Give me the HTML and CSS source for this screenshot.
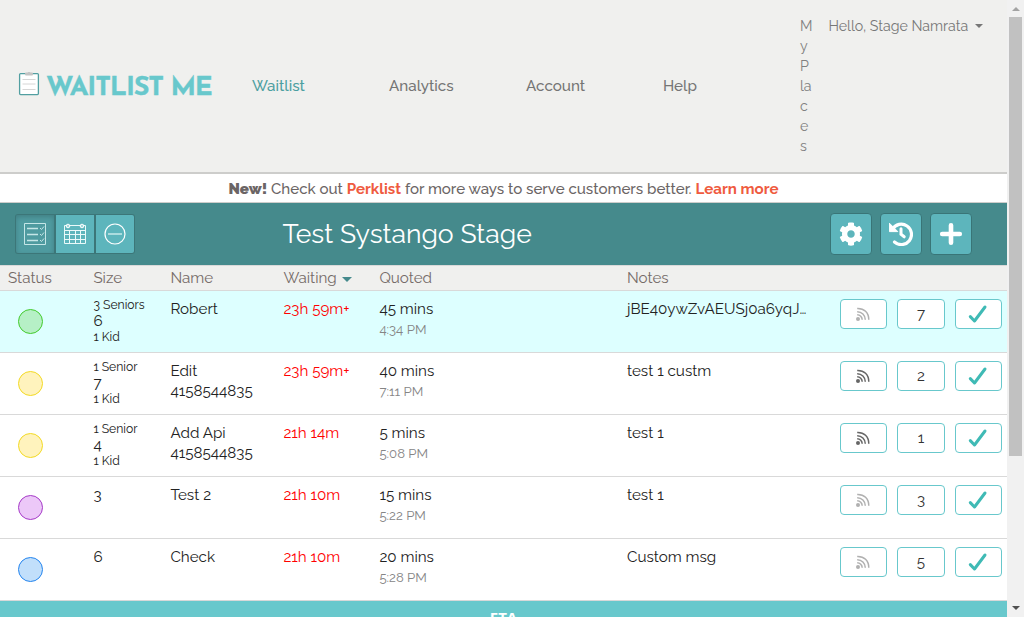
FILE: index.html
```
<!DOCTYPE html>
<html lang="en">
<head>
<meta charset="utf-8">
<title>Waitlist Me</title>
<link rel="stylesheet" href="styles.css">
</head>
<body>
<svg class="defs" width="0" height="0">
  <symbol id="signal" viewBox="0 0 16 16"><circle cx="3" cy="13" r="2"/><g fill="none" stroke="currentColor" stroke-width="1.5"><path d="M2.2 8.7A5 5 0 0 1 7.2 13.7M2.2 5.7A8 8 0 0 1 10.3 13.7M2.2 2.5C9 2.2 13.8 6.5 13.8 13.7"/></g></symbol>
  <symbol id="check" viewBox="0 0 20 20"><path d="M2.300 12.600l4.200 4.400L17 3" fill="none" stroke="#3fbab5" stroke-width="3" stroke-linecap="round" stroke-linejoin="round"/></symbol>
</svg>
<div class="window">
<div class="page">
  <header class="top">
    <div class="logo">
      <svg width="22" height="25" viewBox="0 0 22 25"><rect x="1.6" y="1.6" width="18.8" height="21" rx="1" fill="#fff" stroke="#529fa1" stroke-width="1.3"/><rect x="7" y=".5" width="8" height="3" rx="1" fill="#c4c4c4"/><circle cx="11" cy="1.4" r="1.400" fill="#c4c4c4"/><path d="M4.500 7.500h13M4.500 12h13M4.500 17.500h13" stroke="#d6d6d6"/></svg>
      <span class="brand">WAITLIST ME</span>
    </div>
    <nav class="nav"><a class="active">Waitlist</a><a class="analytics">Analytics</a><a class="account">Account</a><a class="help">Help</a></nav>
    <div class="places">M<br>y<br>P<br>la<br>c<br>e<br>s</div>
    <div class="user"><span>Hello, Stage Namrata</span><i class="caret"></i></div>
  </header>
  <div class="promo"><p><b>New!</b> Check out <a>Perklist</a> for more ways to serve customers better. <a>Learn more</a></p></div>
  <div class="bar">
    <div class="views">
      <button class="view on"><svg width="24" height="24" viewBox="0 0 24 24"><g fill="none" stroke="#c5e6e7"><path d="M1.500 1.500h21v21h-21z"/><path d="M4 6.500h11M4 12.500h11M4 18.500h11" stroke-width="1.4"/><path d="M17 6l1.500 1.500L21 4.500M17 12l1.500 1.500L21 10.500M17 18l1.500 1.500L21 16.500"/></g></svg></button>
      <button class="view"><svg width="24" height="24" viewBox="0 0 24 24"><g fill="none" stroke="#eafafa"><path d="M1.500 3.500h21v18h-21zM1.500 8.500h21M1.500 12.500h21M1.500 17.500h21M6.500 8.500v13M12.500 8.500v13M17.500 8.500v13" stroke-width="1"/></g><circle cx="5" cy="4" r="1.800" fill="#a3d9dc" stroke="#fff"/><circle cx="19" cy="4" r="1.800" fill="#a3d9dc" stroke="#fff"/></svg></button>
      <button class="view"><svg width="24" height="24" viewBox="0 0 24 24"><circle cx="12" cy="12" r="10" fill="none" stroke="#fff" stroke-width="1.2"/><path d="M5 12h14" stroke="#b5e0e2" stroke-width="1.8"/></svg></button>
    </div>
    <h1>Test Systango Stage</h1>
    <div class="tools">
      <button class="tool"><svg width="24" height="24" viewBox="0 0 512 512"><path fill="#fff" d="M487.400 315.700l-42.600-24.600c4.300-23.200 4.300-47 0-70.200l42.600-24.600c4.900-2.800 7.100-8.600 5.500-14-11.100-35.600-30-67.800-54.700-94.600-3.800-4.100-10-5.100-14.800-2.300L380.800 110c-17.900-15.400-38.500-27.300-60.800-35.100V25.800c0-5.600-3.900-10.500-9.400-11.700-36.700-8.200-74.300-7.800-109.200 0-5.500 1.200-9.400 6.100-9.400 11.700V75c-22.200 7.900-42.800 19.800-60.800 35.100L88.700 85.500c-4.900-2.800-11-1.900-14.800 2.300-24.700 26.700-43.600 58.900-54.700 94.600-1.700 5.400.6 11.200 5.500 14L67.300 221c-4.300 23.200-4.300 47 0 70.200l-42.600 24.600c-4.900 2.800-7.100 8.600-5.500 14 11.100 35.600 30 67.800 54.700 94.600 3.800 4.100 10 5.100 14.800 2.300l42.600-24.600c17.900 15.400 38.500 27.300 60.800 35.100v49.200c0 5.600 3.900 10.500 9.400 11.700 36.700 8.200 74.300 7.800 109.200 0 5.500-1.200 9.400-6.100 9.400-11.700v-49.200c22.200-7.900 42.800-19.800 60.800-35.100l42.600 24.600c4.900 2.800 11 1.900 14.800-2.300 24.700-26.700 43.600-58.900 54.700-94.600 1.500-5.500-.7-11.300-5.600-14.100zM256 336c-44.100 0-80-35.900-80-80s35.900-80 80-80 80 35.900 80 80-35.900 80-80 80z"/></svg></button>
      <button class="tool"><svg width="24" height="24" viewBox="0 0 24 24"><path d="M3.500 7.200A10.200 10.200 0 1 1 5.500 20" fill="none" stroke="#fff" stroke-width="3.200" stroke-linecap="round"/><path d="M.4 1.200v8.400h8.400z" fill="#fff" stroke="#fff" stroke-linejoin="round"/><path d="M12 6.800v5.500l3.200 2.500" fill="none" stroke="#fff" stroke-width="3" stroke-linecap="round"/></svg></button>
      <button class="tool"><svg width="24" height="24" viewBox="0 0 24 24"><path d="M3.200 12h17.600M12 3.200v17.600" stroke="#fff" stroke-width="4.600" stroke-linecap="round"/></svg></button>
    </div>
  </div>
  <div class="grid heads"><span>Status</span><span>Size</span><span>Name</span><span>Waiting <i class="caret sort"></i></span><span>Quoted</span><span>Notes</span></div>

  <div class="grid row fresh">
    <i class="dot green"></i>
    <div class="size"><small>3 Seniors</small><span>6</span><small>1 Kid</small></div>
    <div class="name">Robert</div><div class="wait">23h 59m+</div>
    <div>45 mins<small class="time">4:34 PM</small></div>
    <div class="note">jBE40ywZvAEUSj0a6yqJ…</div>
    <div class="acts"><button class="act dim"><svg width="16" height="16"><use href="#signal"/></svg></button><button class="act">7</button><button class="act"><svg width="20" height="20"><use href="#check"/></svg></button></div>
  </div>
  <div class="grid row">
    <i class="dot yellow"></i>
    <div class="size"><small>1 Senior</small><span>7</span><small>1 Kid</small></div>
    <div class="name">Edit<br>4158544835</div><div class="wait">23h 59m+</div>
    <div>40 mins<small class="time">7:11 PM</small></div>
    <div>test 1 custm</div>
    <div class="acts"><button class="act"><svg width="16" height="16"><use href="#signal"/></svg></button><button class="act">2</button><button class="act"><svg width="20" height="20"><use href="#check"/></svg></button></div>
  </div>
  <div class="grid row">
    <i class="dot yellow"></i>
    <div class="size"><small>1 Senior</small><span>4</span><small>1 Kid</small></div>
    <div class="name">Add Api<br>4158544835</div><div class="wait">21h 14m</div>
    <div>5 mins<small class="time">5:08 PM</small></div>
    <div>test 1</div>
    <div class="acts"><button class="act"><svg width="16" height="16"><use href="#signal"/></svg></button><button class="act">1</button><button class="act"><svg width="20" height="20"><use href="#check"/></svg></button></div>
  </div>
  <div class="grid row">
    <i class="dot purple"></i>
    <div>3</div>
    <div class="name">Test 2</div><div class="wait">21h 10m</div>
    <div>15 mins<small class="time">5:22 PM</small></div>
    <div>test 1</div>
    <div class="acts"><button class="act dim"><svg width="16" height="16"><use href="#signal"/></svg></button><button class="act">3</button><button class="act"><svg width="20" height="20"><use href="#check"/></svg></button></div>
  </div>
  <div class="grid row">
    <i class="dot blue"></i>
    <div>6</div>
    <div class="name">Check</div><div class="wait">21h 10m</div>
    <div>20 mins<small class="time">5:28 PM</small></div>
    <div>Custom msg</div>
    <div class="acts"><button class="act dim"><svg width="16" height="16"><use href="#signal"/></svg></button><button class="act">5</button><button class="act"><svg width="20" height="20"><use href="#check"/></svg></button></div>
  </div>
  <footer class="eta">ETA</footer>
</div>
<div class="scroll"><i class="arrow up"></i><i class="thumb"></i><i class="arrow down"></i></div>
</div>
</body>
</html>
```
FILE: styles.css
```
* { box-sizing: border-box; }
html, body { margin: 0; height: 100%; overflow: hidden; }
body { font: 15.2px/21px Raleway, Lato, sans-serif; color: #222; background: #fff; }
.defs { position: absolute; }
button { font: inherit; color: inherit; padding: 0; margin: 0; display: flex; align-items: center; justify-content: center; }
.window { display: flex; width: 1024px; height: 617px; overflow: hidden; }
.page { width: 1007px; flex: none; display: flex; flex-direction: column; }
.page > * { flex: none; }

.top { height: 174px; background: #f0f0ee; border-bottom: 2px solid #cdcdcb; display: flex; color: #757575; }
.logo { width: 252px; padding: 72px 0 0 18px; display: flex; align-items: flex-start; gap: 6px; }
.brand { font: 700 27px/26px "Josefin Sans", Lato, sans-serif; color: #68c8cc; white-space: nowrap; letter-spacing: -1.2px; padding-top: 4px; -webkit-text-stroke: .3px #68c8cc; }
.nav { width: 548px; padding-top: 76px; display: grid; grid-template-columns: repeat(4, 137px); font-weight: 500; }
.nav .active { color: #4c9fa1; }
.places { width: 28.400px; padding-top: 16px; font-size: 14.2px; line-height: 20px; color: #808080; }
.user { padding-top: 16px; font-size: 14.2px; line-height: 20px; display: flex; color: #777; white-space: nowrap; }
.caret { display: inline-block; border: 4px solid transparent; border-top-color: currentColor; border-bottom: 0; margin: 8px 0 0 7px; }
.promo { height: 29px; border-bottom: 1px solid #cdcdcb; text-align: center; color: #6b6565; line-height: 30px; }
.promo p { margin: 0; font-size: 15.100px; font-weight: 500; white-space: nowrap; }
.promo b { font-weight: 900; }
.promo a { color: #ef5b40; font-weight: 700; }

.bar { height: 62px; background: #458a8c; display: flex; align-items: flex-start; padding: 11px 35px 0 15px; }
.views { width: 267.500px; display: flex; }
.view { width: 40px; height: 40px; background: #5db5bc; border: 1px solid #3c7678; border-left-width: 0; border-right-width: 2px; }
.view:first-child { width: 41px; border-left-width: 1px; border-radius: 3px 0 0 3px; }
.view:last-child { width: 39px; border-right-width: 1px; border-radius: 0 3px 3px 0; }
.view.on { background: #4f9ba0; box-shadow: inset 0 2px 5px rgba(0,0,0,.18); }
h1 { margin: 0; font-size: 26.600px; line-height: 40px; font-weight: 400; color: #fff; white-space: nowrap; }
.tools { margin-left: auto; display: flex; gap: 8px; }
.tool { width: 42px; height: 42px; background: #5db5bc; border: 1px solid #397577; border-radius: 4px; margin-top: -1px; }

.grid { display: grid; grid-template-columns: 85.400px 77px 113px 96px 247.600px 213px 162px; padding-left: 8px; white-space: nowrap; }
.heads { height: 26px; background: #f0f0ee; border: solid #d9d9d9; border-width: 1px 0; line-height: 24px; color: #756b68; }
.sort { color: #458a8c; border-width: 5px; border-bottom: 0; margin: 0 0 1px 1px; }
.row { height: 62px; border-bottom: 1px solid #d9d9d9; padding-top: 8px; line-height: 20.500px; }
.name { line-height: 20px; }
.fresh { background: #dff; }
.dot { width: 25px; height: 25px; margin: 10px 0 0 10px; border: 1px solid; border-radius: 50%; }
.green { background: #b6f0c6; border-color: #44cb2e; }
.yellow { background: #fff3bd; border-color: #f3da24; }
.purple { background: #ecc8f8; border-color: #a63bc8; }
.blue { background: #c1dffb; border-color: #2585ee; }
.size { display: flex; flex-direction: column; line-height: 16px; margin-top: -2px; }
.size small { font-size: 12.200px; }
.wait { color: #f00; }
.time { display: block; font-size: 13.200px; color: #858585; }
.acts { display: grid; grid-template-columns: 47px 48px 47px; gap: 10px; }
.act { height: 30px; background: #fff; border: 1px solid #68c8cc; border-radius: 4px; color: #333; fill: #666; }
.act svg { color: #666; }
.act.dim svg { color: #b0b0b0; fill: #b0b0b0; }
.eta { height: 40px; background: #68c8cc; color: #fff; text-align: center; font: 700 15px/20px "Open Sans", sans-serif; padding-top: 6px; }

.scroll { width: 17px; background: #f1f1f1; display: flex; flex-direction: column; align-items: center; height: 617px; }
.thumb { width: 13px; height: 439px; background: #c1c1c1; margin-top: 6px; }
.arrow { border: 4px solid transparent; }
.up { border-bottom-color: #a3a3a3; border-top: 0; margin-top: 7px; }
.down { border-top-color: #505050; border-bottom: 0; margin-top: auto; margin-bottom: 7px; }
```
